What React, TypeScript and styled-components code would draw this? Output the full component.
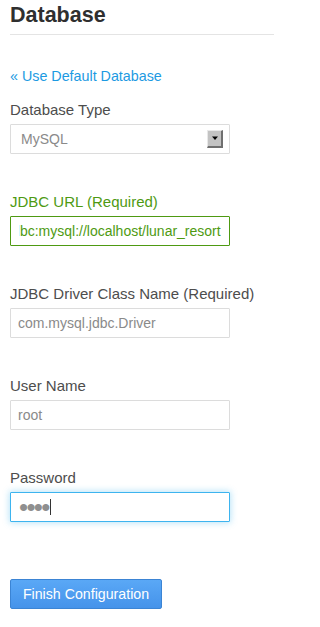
import React, { useEffect, useRef } from "react";
import styled, { createGlobalStyle, css } from "styled-components";

const GlobalStyle = createGlobalStyle`
  body {
    margin: 0;
    background: #fff;
    font-family: "Liberation Sans", Arial, sans-serif;
  }
`;

const Page = styled.div`
  padding: 0 0 20px 10px;
  width: 264px;
`;

const Heading = styled.h1`
  margin: 0;
  padding: 2px 0 6px;
  font-size: 21.5px;
  line-height: 26px;
  font-weight: bold;
  color: #2f2f2f;
  border-bottom: 1px solid #e4e4e4;
`;

const BackLink = styled.a`
  display: block;
  margin: 31px 0 14px;
  font-size: 14.3px;
  line-height: 20px;
  color: #1c9ae2;
  text-decoration: none;
`;

const Field = styled.div`
  margin-bottom: 38px;
`;

const Label = styled.label<{ $error?: boolean }>`
  display: block;
  margin-bottom: 4px;
  font-size: 15px;
  line-height: 20px;
  color: ${(p) => (p.$error ? "#4e9a12" : "#4d4d4d")};
`;

const inputBase = css`
  box-sizing: border-box;
  width: 220px;
  height: 30px;
  margin: 0;
  padding: 0 7px;
  border: 1px solid #dcdcdc;
  border-radius: 1px;
  background: #fff;
  font-family: "Liberation Sans", Arial, sans-serif;
  font-size: 14px;
  color: #8a8a8a;
  outline: none;
`;

const TextInput = styled.input<{ $error?: boolean; $focus?: boolean }>`
  ${inputBase}
  ${(p) =>
    p.$error &&
    css`
      border-color: #4e9a12;
      color: #4e9a12;
      padding: 0 8px;
    `}
  ${(p) =>
    p.$focus &&
    css`
      border-color: #3db4ef;
      box-shadow: 0 0 6px 1px rgba(61, 180, 239, 0.35);
      font-size: 26px;
      letter-spacing: -1.7px;
      padding: 0 8px;
      color: #8f8f8f;
      caret-color: transparent;
    `}
`;

const CaretWrap = styled.div`
  position: relative;
  width: 220px;
`;

const Caret = styled.span`
  position: absolute;
  left: 40px;
  top: 7px;
  width: 1px;
  height: 16px;
  background: #333;
  pointer-events: none;
`;

const SelectWrap = styled.div`
  position: relative;
  width: 220px;
`;

const Select = styled.select`
  ${inputBase}
  appearance: none;
  -webkit-appearance: none;
  padding: 0 10px;
`;

const ArrowButton = styled.span`
  position: absolute;
  top: 6px;
  right: 7px;
  box-sizing: border-box;
  width: 16px;
  height: 18px;
  background: #c3c3c3;
  border-top: 1px solid #e8e8e8;
  border-left: 1px solid #e8e8e8;
  border-right: 2px solid #6f6f6f;
  border-bottom: 2px solid #6f6f6f;
  display: flex;
  align-items: center;
  justify-content: center;
  pointer-events: none;
`;

const SubmitButton = styled.button`
  margin-top: 19px;
  box-sizing: border-box;
  width: 152px;
  height: 30px;
  padding: 0;
  white-space: nowrap;
  border: 1px solid #3b84d4;
  border-radius: 2px;
  background: linear-gradient(#5aa8f6, #4593ea);
  color: #fff;
  font-family: "Liberation Sans", Arial, sans-serif;
  font-size: 14.2px;
  cursor: pointer;
`;

export default function App() {
  const urlRef = useRef<HTMLInputElement>(null);

  useEffect(() => {
    const el = urlRef.current;
    if (el) el.scrollLeft = el.scrollWidth;
  }, []);

  return (
    <Page>
      <GlobalStyle />
      <Heading>Database</Heading>
      <BackLink href="#">« Use Default Database</BackLink>

      <Field>
        <Label>Database Type</Label>
        <SelectWrap>
          <Select defaultValue="mysql">
            <option value="mysql">MySQL</option>
          </Select>
          <ArrowButton>
            <svg width="6" height="5" viewBox="0 0 6 5">
              <path d="M0 0.5h6L3 4z" fill="#000" />
            </svg>
          </ArrowButton>
        </SelectWrap>
      </Field>

      <Field>
        <Label $error>JDBC URL (Required)</Label>
        <TextInput
          ref={urlRef}
          $error
          defaultValue="jdbc:mysql://localhost/lunar_resort"
        />
      </Field>

      <Field>
        <Label>JDBC Driver Class Name (Required)</Label>
        <TextInput defaultValue="com.mysql.jdbc.Driver" />
      </Field>

      <Field>
        <Label>User Name</Label>
        <TextInput defaultValue="root" />
      </Field>

      <Field>
        <Label>Password</Label>
        <CaretWrap>
          <TextInput type="password" $focus defaultValue="test" />
          <Caret />
        </CaretWrap>
      </Field>

      <SubmitButton type="button">Finish Configuration</SubmitButton>
    </Page>
  );
}
